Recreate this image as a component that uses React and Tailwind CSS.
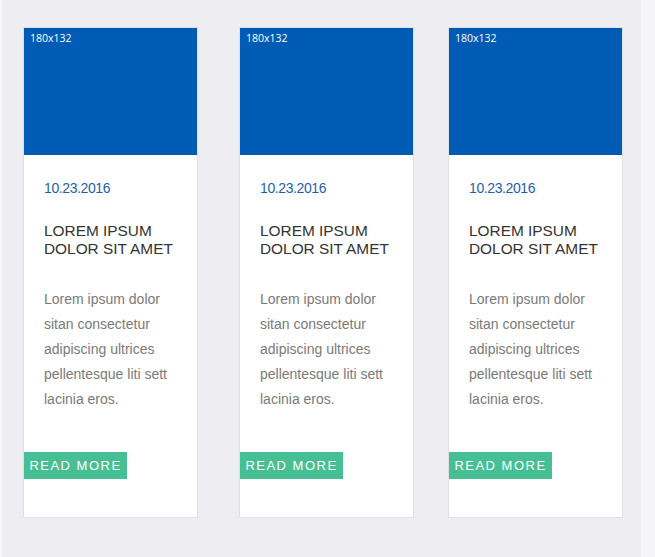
import React from "react";

const posts = [
  { id: 1, ml: "ml-[21px]" },
  { id: 2, ml: "ml-[41px]" },
  { id: 3, ml: "ml-[34px]" },
];

const PostCard = ({ ml }) => (
  <div className={`${ml} w-[175px] h-[491px] shrink-0 bg-white border border-[#e1e1e5] flex flex-col`}>
    {/* placeholder image */}
    <div className="h-[127px] bg-[#005bb5] px-[6px] pt-[2px]">
      <div className="text-[10.5px] leading-[16px] text-white font-['Open_Sans',sans-serif]">180x132</div>
    </div>

    <div className="px-[20px] pt-[23px]">
      <p className="text-[14px] leading-[20px] tracking-[-0.4px] text-[#1c5fa8]">10.23.2016</p>
      <h3 className="mt-[24px] text-[15.4px] leading-[18px] text-[#333333]">
        LOREM IPSUM
        <br />
        DOLOR SIT AMET
      </h3>
      <p className="mt-[29px] text-[14px] leading-[25px] text-[#7a7a7a]">
        Lorem ipsum dolor sitan consectetur adipiscing ultrices pellentesque liti sett lacinia eros.
      </p>
    </div>

    <div className="mt-[40px]">
      <button className="h-[27px] w-[103px] bg-[#47bf94] text-white text-[13px] tracking-[1.5px] text-center">
        READ MORE
      </button>
    </div>
  </div>
);

export default function App() {
  return (
    <div className="min-h-[557px] bg-[#f5f5f7] font-['Liberation_Sans',Arial,sans-serif]">
      <div className="ml-[2px] w-[639px] min-h-[557px] bg-[#eeeef2] pt-[27px] flex items-start">
        {posts.map((p) => (
          <PostCard key={p.id} ml={p.ml} />
        ))}
      </div>
    </div>
  );
}
